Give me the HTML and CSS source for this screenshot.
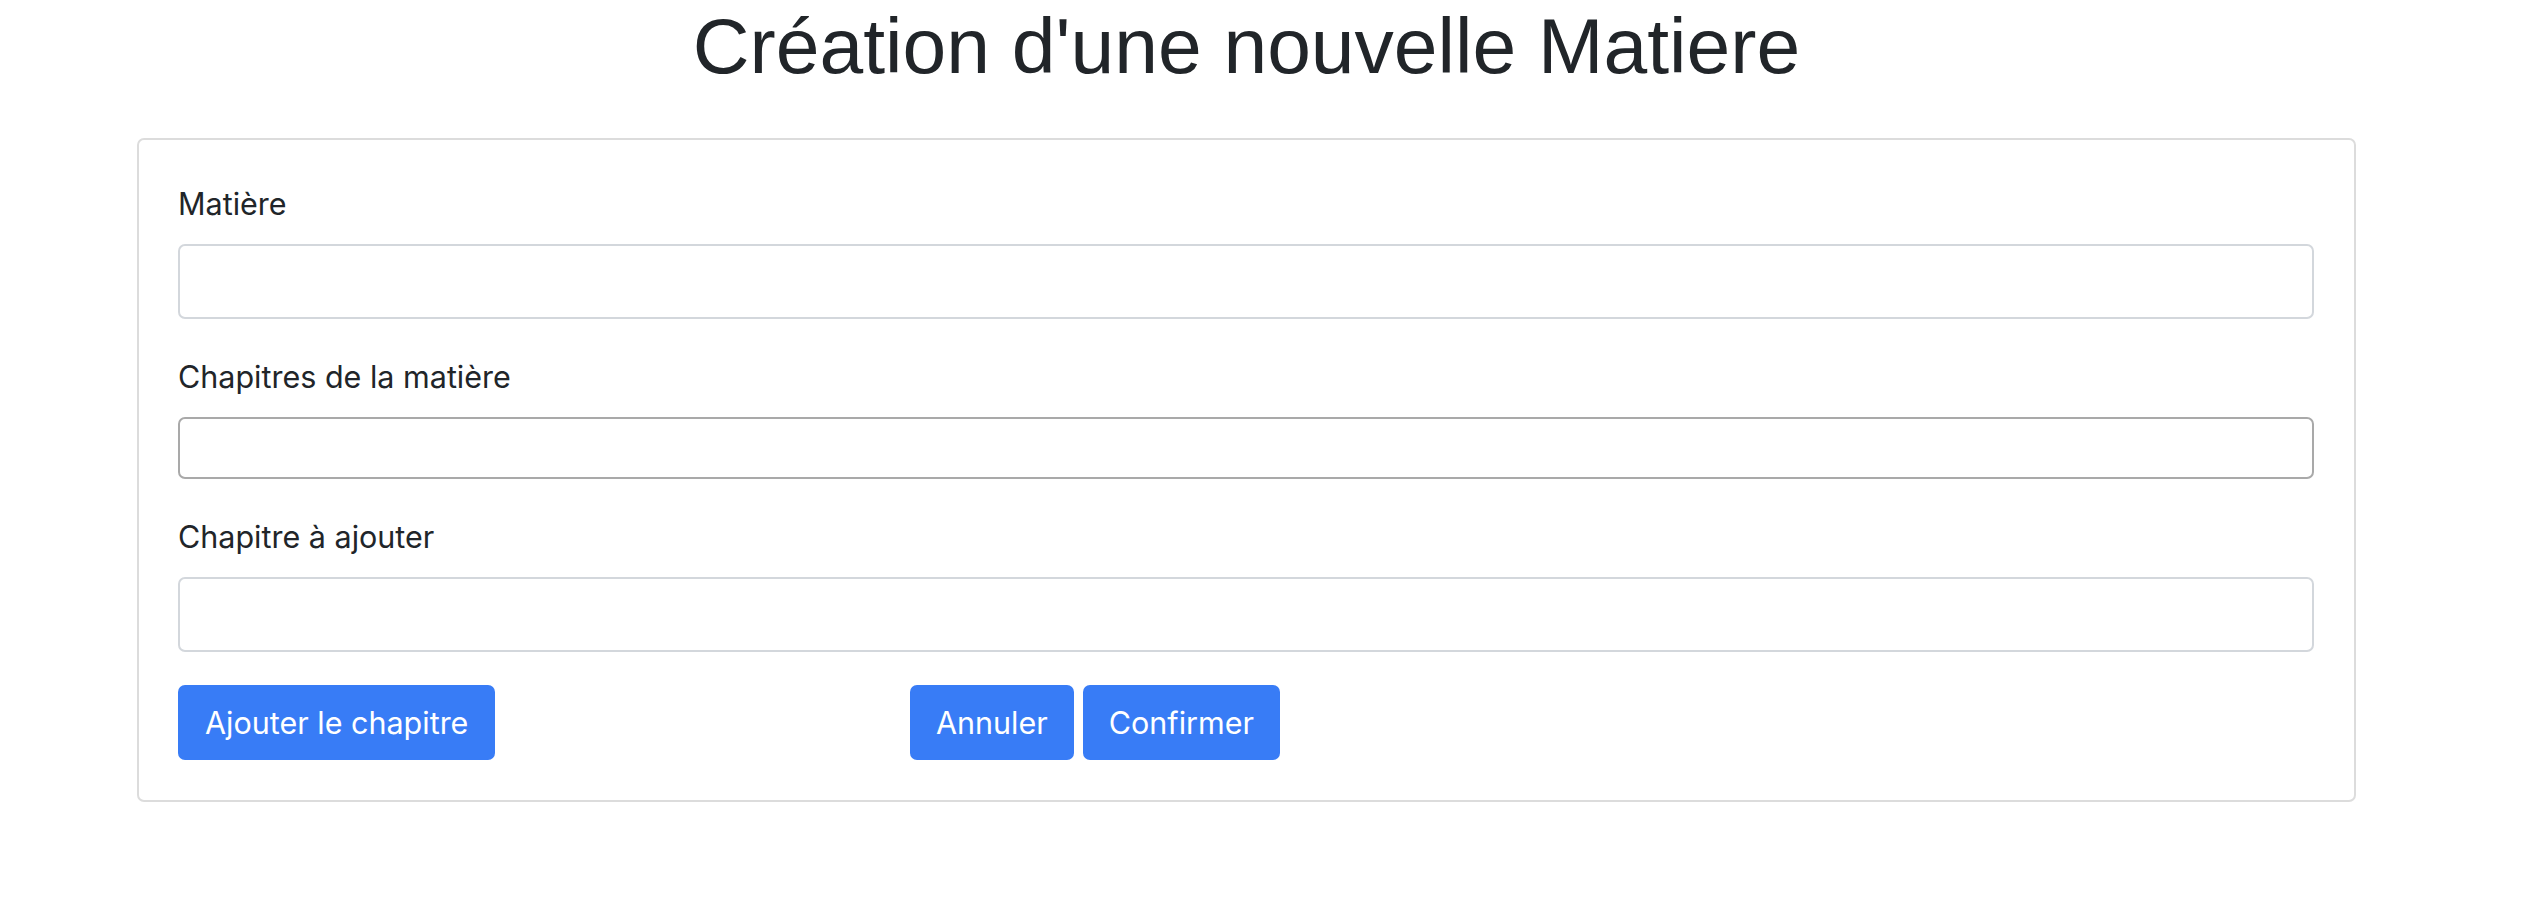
FILE: index.html
```html
<!DOCTYPE html>
<html lang="fr">
<head>
<meta charset="utf-8">
<title>Création d'une nouvelle Matiere</title>
<link rel="stylesheet" href="styles.css">
</head>
<body>
<div class="page">
  <h1 class="title">Création d'une nouvelle Matiere</h1>
  <div class="card">
    <div class="group">
      <label class="label" for="matiere">Matière</label>
      <input class="field" id="matiere" type="text">
    </div>
    <div class="group">
      <label class="label" for="chapitres">Chapitres de la matière</label>
      <input class="field field-dark" id="chapitres" type="text">
    </div>
    <div class="group group-last">
      <label class="label" for="ajout">Chapitre à ajouter</label>
      <input class="field" id="ajout" type="text">
    </div>
    <div class="actions">
      <div class="actions-left">
        <button class="btn" type="button">Ajouter le chapitre</button>
      </div>
      <div class="actions-right">
        <button class="btn btn-compact" type="button">Annuler</button>
        <button class="btn btn-compact" type="button">Confirmer</button>
      </div>
    </div>
  </div>
</div>
</body>
</html>
```

FILE: styles.css
```css
* {
  box-sizing: border-box;
}

html, body {
  margin: 0;
  padding: 0;
  background: #ffffff;
}

body {
  font-family: Inter, "Noto Sans", sans-serif;
  color: #212529;
}

.page {
  width: 2219px;
  margin-left: 137px;
  padding-top: 2px;
}

.title {
  margin: 0 0 48px 0;
  font-family: "Liberation Sans", Arial, sans-serif;
  font-weight: 400;
  font-size: 78.6px;
  line-height: 88px;
  text-align: center;
  color: #212529;
}

.card {
  border: 2px solid #dcdcdc;
  border-radius: 7px;
  padding: 41px 40px 40px 39px;
  background: #ffffff;
}

.group {
  display: flex;
  flex-direction: column;
  margin-bottom: 35px;
}

.group-last {
  margin-bottom: 33px;
}

.label {
  font-size: 30.5px;
  line-height: 46px;
  margin-bottom: 17px;
  color: #212529;
}

.field {
  display: block;
  width: 100%;
  height: 75px;
  border: 2px solid #d3d7dc;
  border-radius: 7px;
  background: #ffffff;
  font-family: inherit;
  font-size: 30px;
  padding: 0 20px;
  outline: none;
}

.field-dark {
  height: 62px;
  border-color: #a9a9a9;
}

.actions {
  display: flex;
  align-items: center;
}

.actions-left {
  width: 732px;
}

.actions-right {
  display: flex;
  gap: 9px;
}

.btn {
  height: 75px;
  padding: 0 27px;
  border: none;
  border-radius: 7px;
  background: #387cf6;
  color: #ffffff;
  font-family: Inter, "Noto Sans", sans-serif;
  font-size: 30.5px;
  line-height: 46px;
  cursor: pointer;
}

.btn-compact {
  padding: 0 26px;
}
```
